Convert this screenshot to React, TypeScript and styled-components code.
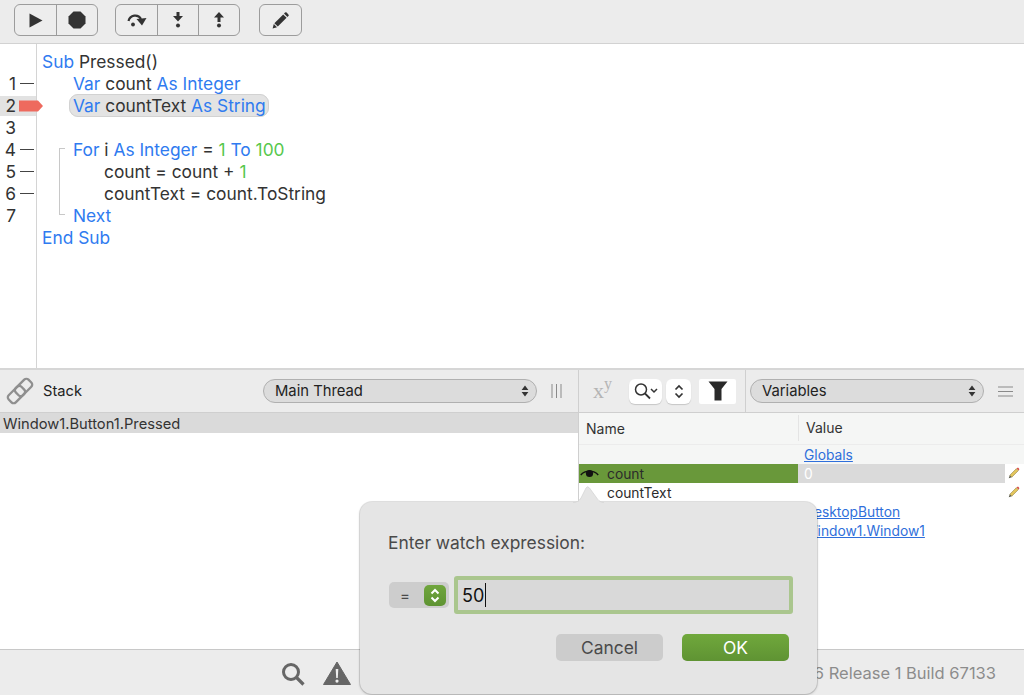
import React from "react";
import styled, { createGlobalStyle } from "styled-components";

const GlobalStyle = createGlobalStyle`
  html, body {
    margin: 0;
    padding: 0;
    height: 100%;
    overflow: hidden;
    background: #ffffff;
    font-family: "Inter", "Liberation Sans", sans-serif;
  }
  #root {
    height: 100%;
  }
`;

const Page = styled.div`
  position: relative;
  display: flex;
  flex-direction: column;
  width: 1024px;
  height: 695px;
  overflow: hidden;
  color: #333;
`;

const Toolbar = styled.div`
  display: flex;
  align-items: flex-start;
  flex: 0 0 44px;
  box-sizing: border-box;
  padding: 4px 0 0 14px;
  background: #ececec;
  border-bottom: 1px solid #d2d2d2;
`;

const ButtonGroup = styled.div<{ $gap?: number }>`
  display: flex;
  height: 32px;
  box-sizing: border-box;
  margin-right: ${({ $gap }) => $gap ?? 0}px;
  border: 1px solid #9c9c9c;
  border-radius: 6px;
  background: #ededed;
  overflow: hidden;
`;

const ToolButton = styled.div<{ $width: number }>`
  display: flex;
  align-items: center;
  justify-content: center;
  width: ${({ $width }) => $width}px;
  & + & {
    border-left: 1px solid #9c9c9c;
  }
`;

const Editor = styled.div`
  display: flex;
  flex: 0 0 326px;
  box-sizing: border-box;
  border-bottom: 2px solid #d6d6d6;
  font-size: 17.35px;
  line-height: 22px;
`;

const Gutter = styled.div`
  flex: 0 0 37px;
  box-sizing: border-box;
  padding-top: 29px;
  border-right: 1px solid #d4d4d4;
`;

const GutterRow = styled.div<{ $active?: boolean }>`
  position: relative;
  height: 22px;
  box-sizing: border-box;
  width: 100%;
  padding-right: 20px;
  text-align: right;
  color: #333;
  background: ${({ $active }) =>
    $active ? "linear-gradient(#fff 0, #fff 1px, #e2e2e2 1px, #e2e2e2 21px, #fff 21px)" : "transparent"};
`;

const LineMark = styled.span`
  position: absolute;
  left: 20px;
  top: 10px;
  width: 14px;
  height: 1px;
  background: #444;
`;

const Breakpoint = styled.svg`
  position: absolute;
  left: 19px;
  top: 5px;
  z-index: 1;
`;

const Code = styled.div`
  flex: 1;
  padding-top: 7px;
`;

const CodeLine = styled.div<{ $indent?: number }>`
  height: 22px;
  padding-left: ${({ $indent }) => 5 + ($indent ?? 0) * 31}px;
  white-space: pre;
`;

const CurrentStatement = styled.span`
  margin-left: -4px;
  padding: 0 2px 0 3px;
  background: #e3e3e3;
  border: 1px solid #d2d2d2;
  border-radius: 9px;
`;

const FoldBlock = styled.div`
  position: relative;
  &::before {
    content: "";
    position: absolute;
    left: 22px;
    top: 9px;
    width: 5px;
    height: 65px;
    border: 1px solid #c8c8c8;
    border-right: none;
  }
`;

const Keyword = styled.span`
  color: #2f7bf0;
`;

const NumberToken = styled.span`
  color: #57c84d;
`;

const Panes = styled.div`
  display: flex;
  flex: 0 0 279px;
  min-height: 0;
`;

const StackPane = styled.div`
  flex: 0 0 578px;
  border-right: 1px solid #cfcfcf;
  box-sizing: content-box;
`;

const VariablesPane = styled.div`
  flex: 1;
  min-width: 0;
`;

const PaneHeader = styled.div`
  display: flex;
  align-items: center;
  height: 43px;
  box-sizing: border-box;
  background: #ececec;
  border-bottom: 1px solid #cfcfcf;
`;

const LinkIcon = styled.svg`
  flex: 0 0 30px;
  margin-left: 5px;
`;

const StackTitle = styled.span`
  flex: 0 0 auto;
  width: 220px;
  margin-left: 8px;
  font-size: 14.7px;
  color: #222;
`;

const PopupSelect = styled.div<{ $width: number }>`
  position: relative;
  display: flex;
  align-items: center;
  width: ${({ $width }) => $width}px;
  height: 24px;
  box-sizing: border-box;
  padding-left: 11px;
  background: #dcdcdc;
  border: 1px solid #b0b0b0;
  border-radius: 12px;
  font-size: 14.8px;
  color: #222;
`;

const SelectArrows = styled.svg`
  position: absolute;
  right: 7px;
  top: 5px;
`;

const PaneMenu = styled.svg`
  margin-left: 14px;
`;

const FilterTools = styled.div`
  display: flex;
  align-items: center;
  flex: 0 0 167px;
  height: 42px;
  box-sizing: border-box;
  margin-right: 4px;
  border-right: 1px solid #cfcfcf;
`;

const Power = styled.span`
  width: 50px;
  padding-left: 14px;
  box-sizing: border-box;
  font-family: "Liberation Serif", serif;
  font-size: 22px;
  color: #b4b4b4;
  line-height: 1;
  sup {
    font-size: 16px;
    vertical-align: 9px;
    line-height: 0;
  }
`;

const WhiteButton = styled.div<{ $width: number; $flat?: boolean; $gap?: number }>`
  display: flex;
  align-items: center;
  justify-content: center;
  width: ${({ $width }) => $width}px;
  height: 25px;
  margin-right: ${({ $gap }) => $gap ?? 0}px;
  background: #fff;
  border-radius: ${({ $flat }) => ($flat ? "2px" : "6px")};
  box-shadow: ${({ $flat }) => ($flat ? "none" : "0 1px 1px rgba(0, 0, 0, 0.16)")};
`;

const StackRow = styled.div`
  height: 20px;
  padding-left: 3px;
  background: #dadada;
  font-size: 14.7px;
  line-height: 22px;
  color: #333;
`;

const ColumnHeaders = styled.div`
  display: grid;
  grid-template-columns: 219px 1fr;
  height: 32px;
  box-sizing: border-box;
  background: #f5f6f5;
  border-bottom: 1px solid #ececec;
  font-size: 14px;
  line-height: 31px;
  color: #333;
`;

const ColumnHead = styled.div`
  padding-left: 7px;
  & + & {
    height: 26px;
    margin-top: 2px;
    line-height: 26px;
    padding-left: 7px;
    border-left: 1px solid #e4e4e4;
  }
`;

const VarRow = styled.div<{ $selected?: boolean; $shaded?: boolean }>`
  display: grid;
  grid-template-columns: 219px 1fr 19px;
  grid-template-rows: 19px;
  height: 19px;
  background: ${({ $selected, $shaded }) => ($selected ? "#69983a" : $shaded ? "#f5f6f5" : "#fff")};
  font-size: 13.8px;
  line-height: 21px;
`;

const NameCell = styled.div`
  position: relative;
  padding-left: 28px;
  color: #2b2b2b;
`;

const WatchEye = styled.svg`
  position: absolute;
  left: 1px;
  top: 4px;
`;

const ValueCell = styled.div<{ $filled?: boolean }>`
  padding-left: 6px;
  background: ${({ $filled }) => ($filled ? "#dadada" : "transparent")};
  color: ${({ $filled }) => ($filled ? "#fff" : "inherit")};
`;

const EditCell = styled.div`
  display: flex;
  align-items: center;
  justify-content: center;
  padding-right: 3px;
  background: #fff;
`;

const ValueLink = styled.a`
  color: #2f6fdb;
  text-decoration: underline;
`;

const StatusBar = styled.div`
  display: flex;
  align-items: center;
  flex: 1;
  box-sizing: border-box;
  padding: 0 28px 0 281px;
  background: #ececec;
  border-top: 1px solid #c8c8c8;
`;

const StatusIcons = styled.div`
  display: flex;
  align-items: center;
  gap: 18px;
`;

const BuildText = styled.span`
  margin-left: auto;
  font-size: 16.5px;
  color: #8c8c8c;
`;

const Popover = styled.div`
  position: absolute;
  left: 360px;
  top: 502px;
  width: 457px;
  height: 192px;
  box-sizing: border-box;
  padding: 31px 24px 0 28px;
  background: #e5e5e5;
  border-radius: 12px;
  box-shadow: 0 0 0 1px rgba(0, 0, 0, 0.1), 0 1px 3px rgba(0, 0, 0, 0.2);
`;

const PopoverArrow = styled.svg`
  position: absolute;
  left: 213px;
  top: -17px;
`;

const PopoverLabel = styled.div`
  font-size: 17.4px;
  line-height: 20px;
  color: #4a4a4a;
`;

const ExpressionRow = styled.div`
  display: flex;
  align-items: center;
  gap: 5px;
  margin: 23px 0 0 1px;
`;

const OperatorSelect = styled.div`
  display: flex;
  align-items: center;
  justify-content: space-between;
  width: 60px;
  height: 26px;
  box-sizing: border-box;
  padding: 0 3px 0 11px;
  background: #cdcdcd;
  border-radius: 5px;
  font-size: 15px;
  color: #4a4a4a;
`;

const StepperBadge = styled.div`
  display: flex;
  align-items: center;
  justify-content: center;
  width: 22px;
  height: 21px;
  background: linear-gradient(#70a63d, #5e9332);
  border-radius: 5px;
`;

const ExpressionInput = styled.div`
  display: flex;
  align-items: center;
  width: 339px;
  height: 38px;
  box-sizing: border-box;
  padding-left: 4px;
  background: #d9d9d9;
  border: 4px solid #aac68e;
  border-radius: 3px;
  font-size: 18px;
  color: #111;
`;

const Caret = styled.span`
  width: 1px;
  height: 24px;
  margin-left: 1px;
  background: #111;
`;

const PopoverActions = styled.div`
  display: flex;
  justify-content: flex-end;
  gap: 19px;
  margin: 20px 4px 0 0;
`;

const DialogButton = styled.div<{ $primary?: boolean }>`
  display: flex;
  align-items: center;
  justify-content: center;
  width: 107px;
  height: 27px;
  border-radius: 5px;
  font-size: 17.4px;
  color: ${({ $primary }) => ($primary ? "#fff" : "#4a4a4a")};
  background: ${({ $primary }) => ($primary ? "linear-gradient(#70a83c, #5f9333)" : "#cccccc")};
`;

const Pencil = () => (
  <svg width="13" height="13" viewBox="0 0 12 12">
    <path d="M8.6 1.6l1.8 1.8-6 6-1.8-1.8z" fill="#e3c65c" stroke="#9a8a4a" strokeWidth="0.6" />
    <path d="M8.8 1.4l.7-.6a.8.8 0 0 1 1 0l.7.7a.8.8 0 0 1 0 1l-.6.7z" fill="#d9534a" />
    <path d="M2.6 7.6l1.8 1.8-2.8 1z" fill="#5a5a4a" />
  </svg>
);

const Arrows = ({ color = "#333" }: { color?: string }) => (
  <SelectArrows width="8" height="12" viewBox="0 0 8 12">
    <path d="M4 0.5L7.4 5H0.6zM4 11.5L0.6 7h6.8z" fill={color} />
  </SelectArrows>
);

const Chevrons = ({ color, width = 2 }: { color: string; width?: number }) => (
  <svg width="10" height="15" viewBox="0 0 10 15" fill="none" stroke={color} strokeWidth={width}>
    <path d="M1.5 5.5L5 2l3.5 3.5M1.5 9.5L5 13l3.5-3.5" />
  </svg>
);

const gutterLines: { label: string; mark?: boolean; active?: boolean }[] = [
  { label: "1", mark: true },
  { label: "2", active: true },
  { label: "3" },
  { label: "4", mark: true },
  { label: "5", mark: true },
  { label: "6", mark: true },
  { label: "7" },
];

export default function App() {
  return (
    <Page>
      <GlobalStyle />
      <Toolbar>
        <ButtonGroup $gap={17}>
          <ToolButton $width={41}>
            <svg width="14" height="15" viewBox="0 0 14 15">
              <path d="M0.5 0.5L13.5 7.5 0.5 14.5z" fill="#333" />
            </svg>
          </ToolButton>
          <ToolButton $width={40}>
            <svg width="18" height="18" viewBox="0 0 18 18">
              <path d="M5.5 0.5h7l5 5v7l-5 5h-7l-5-5v-7z" fill="#333" />
            </svg>
          </ToolButton>
        </ButtonGroup>
        <ButtonGroup $gap={19}>
          <ToolButton $width={41}>
            <svg width="20" height="14" viewBox="0 0 20 14" fill="none">
              <path d="M1.500 8C3 2 11 0.500 14 6" stroke="#333" strokeWidth="2.200" />
              <path d="M9.500 6L19.500 5 15 12.500z" fill="#333" />
              <circle cx="6" cy="11.500" r="1.900" fill="#333" />
            </svg>
          </ToolButton>
          <ToolButton $width={40}>
            <svg width="12" height="16" viewBox="0 0 12 16">
              <path d="M4.500 0h3v4H11L6 9.500 1 4h3.500z" fill="#333" />
              <circle cx="6" cy="13.500" r="2" fill="#333" />
            </svg>
          </ToolButton>
          <ToolButton $width={40}>
            <svg width="12" height="16" viewBox="0 0 12 16">
              <path d="M4.500 10h3V5.500H11L6 0 1 5.500h3.500z" fill="#333" />
              <circle cx="6" cy="13.500" r="2" fill="#333" />
            </svg>
          </ToolButton>
        </ButtonGroup>
        <ButtonGroup>
          <ToolButton $width={41}>
            <svg width="17" height="17" viewBox="0 0 17 17">
              <path d="M11.200 2.400l3.400 3.400-8.800 8.800-3.400-3.400z" fill="#333" />
              <path d="M12 1.600l1-1a1.200 1.200 0 0 1 1.600 0l1.800 1.800a1.200 1.200 0 0 1 0 1.600l-1 1z" fill="#333" />
              <path d="M1.800 12l3.200 3.200-4.400 1.200z" fill="#333" />
            </svg>
          </ToolButton>
        </ButtonGroup>
      </Toolbar>

      <Editor>
        <Gutter>
          {gutterLines.map((line) => (
            <GutterRow key={line.label} $active={line.active}>
              {line.label}
              {line.mark && <LineMark />}
              {line.active && (
                <Breakpoint width="25" height="12" viewBox="0 0 25 12">
                  <path d="M0 0.500h19l5 5.500-5 5.500H0z" fill="#ee6a5e" />
                </Breakpoint>
              )}
            </GutterRow>
          ))}
        </Gutter>
        <Code>
          <CodeLine>
            <Keyword>Sub</Keyword> Pressed()
          </CodeLine>
          <CodeLine $indent={1}>
            <Keyword>Var</Keyword> count <Keyword>As Integer</Keyword>
          </CodeLine>
          <CodeLine $indent={1}>
            <CurrentStatement>
              <Keyword>Var</Keyword> countText <Keyword>As String</Keyword>
            </CurrentStatement>
          </CodeLine>
          <CodeLine />
          <FoldBlock>
            <CodeLine $indent={1}>
              <Keyword>For</Keyword> i <Keyword>As Integer</Keyword> = <NumberToken>1</NumberToken>{" "}
              <Keyword>To</Keyword> <NumberToken>100</NumberToken>
            </CodeLine>
            <CodeLine $indent={2}>
              count = count + <NumberToken>1</NumberToken>
            </CodeLine>
            <CodeLine $indent={2}>countText = count.ToString</CodeLine>
            <CodeLine $indent={1}>
              <Keyword>Next</Keyword>
            </CodeLine>
          </FoldBlock>
          <CodeLine>
            <Keyword>End Sub</Keyword>
          </CodeLine>
        </Code>
      </Editor>

      <Panes>
        <StackPane>
          <PaneHeader>
            <LinkIcon width="30" height="30" viewBox="0 0 30 30" fill="none" stroke="#8f8f8f" strokeWidth="2.300">
              <g transform="rotate(-45 15 15)">
                <rect x="1" y="10" width="18" height="10" rx="3" />
                <rect x="11" y="10" width="18" height="10" rx="3" />
              </g>
            </LinkIcon>
            <StackTitle>Stack</StackTitle>
            <PopupSelect $width={274}>
              Main Thread
              <Arrows />
            </PopupSelect>
            <PaneMenu width="11" height="14" viewBox="0 0 11 14">
              <path d="M1 0v14M5.500 0v14M10 0v14" stroke="#8a8a8a" strokeWidth="1" />
            </PaneMenu>
          </PaneHeader>
          <StackRow>Window1.Button1.Pressed</StackRow>
        </StackPane>
        <VariablesPane>
          <PaneHeader>
            <FilterTools>
              <Power>
                x<sup>y</sup>
              </Power>
              <WhiteButton $width={33} $gap={4}>
                <svg width="26" height="18" viewBox="0 0 26 18" fill="none" stroke="#333">
                  <circle cx="8" cy="7.500" r="5.500" strokeWidth="1.500" />
                  <path d="M12 11.500l5 5" strokeWidth="1.800" />
                  <path d="M18 7l3 3 3-3" strokeWidth="1.500" />
                </svg>
              </WhiteButton>
              <WhiteButton $width={25} $gap={8}>
                <Chevrons color="#333" width={1.7} />
              </WhiteButton>
              <WhiteButton $width={37} $flat>
                <svg width="20" height="20" viewBox="0 0 20 20">
                  <path d="M0.500 0.500h19l-6 7.500v11.500h-7V8z" fill="#2a2a2a" />
                </svg>
              </WhiteButton>
            </FilterTools>
            <PopupSelect $width={234}>
              Variables
              <Arrows />
            </PopupSelect>
            <PaneMenu width="15" height="11" viewBox="0 0 15 11">
              <path d="M0 1h15M0 5.500h15M0 10h15" stroke="#8a8a8a" strokeWidth="1.200" />
            </PaneMenu>
          </PaneHeader>
          <ColumnHeaders>
            <ColumnHead>Name</ColumnHead>
            <ColumnHead>Value</ColumnHead>
          </ColumnHeaders>
          <VarRow $shaded>
            <NameCell />
            <ValueCell>
              <ValueLink>Globals</ValueLink>
            </ValueCell>
          </VarRow>
          <VarRow $selected>
            <NameCell>
              <WatchEye width="19" height="11" viewBox="0 0 19 11">
                <path d="M0.800 7C5 1.800 14 1.800 18.200 7" stroke="#111" strokeWidth="1.400" fill="none" />
                <circle cx="9.500" cy="5.500" r="3.600" fill="#111" />
              </WatchEye>
              count
            </NameCell>
            <ValueCell $filled>0</ValueCell>
            <EditCell>
              <Pencil />
            </EditCell>
          </VarRow>
          <VarRow>
            <NameCell>countText</NameCell>
            <ValueCell />
            <EditCell>
              <Pencil />
            </EditCell>
          </VarRow>
          <VarRow>
            <NameCell />
            <ValueCell>
              <ValueLink>DesktopButton</ValueLink>
            </ValueCell>
          </VarRow>
          <VarRow>
            <NameCell />
            <ValueCell>
              <ValueLink>Window1.Window1</ValueLink>
            </ValueCell>
          </VarRow>
        </VariablesPane>
      </Panes>

      <StatusBar>
        <StatusIcons>
          <svg width="24" height="26" viewBox="0 0 24 26" fill="none" stroke="#666">
            <circle cx="10" cy="12" r="7.500" strokeWidth="3" />
            <path d="M15.500 17.500l7 7" strokeWidth="3.200" />
          </svg>
          <svg width="28" height="24" viewBox="0 0 28 24">
            <path d="M14 1l13.500 22.500H0.500z" fill="#666" stroke="#666" strokeLinejoin="round" />
            <path d="M12.700 8h2.600l-.5 9h-1.600zM14 18.500a1.600 1.600 0 1 0 0 3.200 1.600 1.600 0 0 0 0-3.200z" fill="#eee" />
          </svg>
        </StatusIcons>
        <BuildText>6 Release 1 Build 67133</BuildText>
      </StatusBar>

      <Popover>
        <PopoverArrow width="31" height="18" viewBox="0 0 31 18">
          <path d="M0 18C4 18 6 16 8 13L13 3Q14.500 0.500 16.500 3L23 12C25 15 27 18 31 18Z" fill="#e5e5e5" />
          <path d="M0 17.500C4 17.500 6 16 8 13L13 3Q14.500 0.500 16.500 3L23 12C25 15 27 17.500 31 17.500" fill="none" stroke="#d4d4d4" strokeWidth="0.800" />
        </PopoverArrow>
        <PopoverLabel>Enter watch expression:</PopoverLabel>
        <ExpressionRow>
          <OperatorSelect>
            =
            <StepperBadge>
              <Chevrons color="#fff" />
            </StepperBadge>
          </OperatorSelect>
          <ExpressionInput>
            50
            <Caret />
          </ExpressionInput>
        </ExpressionRow>
        <PopoverActions>
          <DialogButton>Cancel</DialogButton>
          <DialogButton $primary>OK</DialogButton>
        </PopoverActions>
      </Popover>
    </Page>
  );
}
